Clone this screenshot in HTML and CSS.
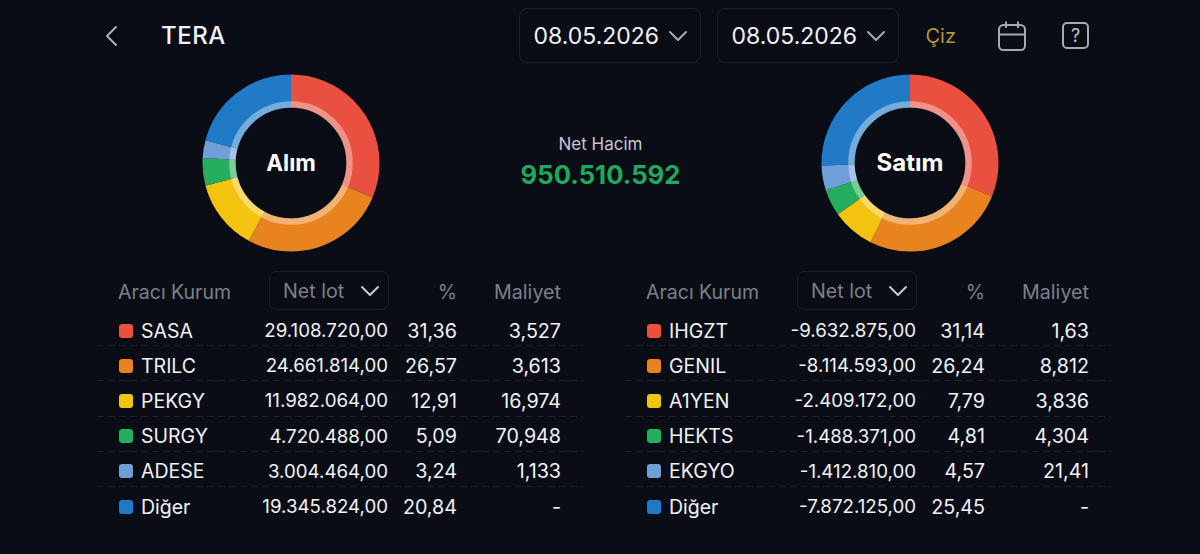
FILE: index.html
```html
<!DOCTYPE html>
<html lang="tr">
<head>
    <meta charset="UTF-8">
    <title>TERA</title>
    <link rel="stylesheet" href="styles.css">
</head>
<body>
    <!-- ust bar -->
    <header class="topbar">
        <svg class="back-icon" width="14" height="22" viewBox="0 0 14 22"><path d="M12 2 L3 11 L12 20"/></svg>
        <h1 class="title">TERA</h1>
        <div class="date-group">
            <div class="date-box">
                <span>08.05.2026</span>
                <svg class="chev" width="20" height="12" viewBox="0 0 20 12"><path d="M2 2 L10 10 L18 2"/></svg>
            </div>
            <div class="date-box">
                <span>08.05.2026</span>
                <svg class="chev" width="20" height="12" viewBox="0 0 20 12"><path d="M2 2 L10 10 L18 2"/></svg>
            </div>
        </div>
        <span class="draw-link">Çiz</span>
        <svg class="tool-icon cal-icon" width="30" height="32" viewBox="0 0 30 32">
            <rect x="2" y="5" width="26" height="25" rx="4.500"/>
            <path d="M2 14.500 H28 M9 1.500 V8 M21 1.500 V8"/>
        </svg>
        <div class="help-icon">?</div>
    </header>

    <!-- halkalar -->
    <section class="charts">
        <svg class="donut" width="178" height="178" viewBox="0 0 178 178">
            <g class="slices" transform="rotate(-90 89 89)">
                <circle r="72" cx="89" cy="89" pathLength="100" stroke="#e9503f" stroke-dasharray="31.36 100"/>
                <circle r="72" cx="89" cy="89" pathLength="100" stroke="#e98320" stroke-dasharray="26.57 100" stroke-dashoffset="-31.36"/>
                <circle r="72" cx="89" cy="89" pathLength="100" stroke="#f3c30f" stroke-dasharray="12.91 100" stroke-dashoffset="-57.93"/>
                <circle r="72" cx="89" cy="89" pathLength="100" stroke="#25ae5e" stroke-dasharray="5.09 100" stroke-dashoffset="-70.84"/>
                <circle r="72" cx="89" cy="89" pathLength="100" stroke="#6f9fd6" stroke-dasharray="3.24 100" stroke-dashoffset="-75.93"/>
                <circle r="72" cx="89" cy="89" pathLength="100" stroke="#207ac6" stroke-dasharray="20.84 100" stroke-dashoffset="-79.16"/>
            </g>
            <circle class="inner-ring" r="58.500" cx="89" cy="89"/>
            <text class="donut-label" x="89" y="97" text-anchor="middle">Alım</text>
        </svg>

        <div class="net-volume">
            <div class="net-label">Net Hacim</div>
            <div class="net-value">950.510.592</div>
        </div>

        <svg class="donut" width="178" height="178" viewBox="0 0 178 178">
            <g class="slices" transform="rotate(-90 89 89)">
                <circle r="72" cx="89" cy="89" pathLength="100" stroke="#e9503f" stroke-dasharray="31.14 100"/>
                <circle r="72" cx="89" cy="89" pathLength="100" stroke="#e98320" stroke-dasharray="26.24 100" stroke-dashoffset="-31.14"/>
                <circle r="72" cx="89" cy="89" pathLength="100" stroke="#f3c30f" stroke-dasharray="7.79 100" stroke-dashoffset="-57.38"/>
                <circle r="72" cx="89" cy="89" pathLength="100" stroke="#25ae5e" stroke-dasharray="4.81 100" stroke-dashoffset="-65.17"/>
                <circle r="72" cx="89" cy="89" pathLength="100" stroke="#6f9fd6" stroke-dasharray="4.57 100" stroke-dashoffset="-69.98"/>
                <circle r="72" cx="89" cy="89" pathLength="100" stroke="#207ac6" stroke-dasharray="25.45 100" stroke-dashoffset="-74.55"/>
            </g>
            <circle class="inner-ring" r="58.500" cx="89" cy="89"/>
            <text class="donut-label sell-label" x="89" y="97" text-anchor="middle">Satım</text>
        </svg>
    </section>

    <!-- tablolar -->
    <section class="tables">
        <div class="broker-table">
            <div class="row head-row">
                <span class="name-head">Aracı Kurum</span>
                <div class="lot-select">
                    <span>Net lot</span>
                    <svg class="chev" width="20" height="12" viewBox="0 0 20 12"><path d="M2 2 L10 10 L18 2"/></svg>
                </div>
                <span class="num">%</span>
                <span class="num">Maliyet</span>
            </div>
            <div class="row"><span class="name"><i class="dot red"></i>SASA</span><span class="num lot">29.108.720,00</span><span class="num">31,36</span><span class="num">3,527</span></div>
            <div class="row"><span class="name"><i class="dot orange"></i>TRILC</span><span class="num lot">24.661.814,00</span><span class="num">26,57</span><span class="num">3,613</span></div>
            <div class="row"><span class="name"><i class="dot yellow"></i>PEKGY</span><span class="num lot">11.982.064,00</span><span class="num">12,91</span><span class="num">16,974</span></div>
            <div class="row"><span class="name"><i class="dot green"></i>SURGY</span><span class="num lot">4.720.488,00</span><span class="num">5,09</span><span class="num">70,948</span></div>
            <div class="row"><span class="name"><i class="dot light"></i>ADESE</span><span class="num lot">3.004.464,00</span><span class="num">3,24</span><span class="num">1,133</span></div>
            <div class="row"><span class="name"><i class="dot blue"></i>Diğer</span><span class="num lot">19.345.824,00</span><span class="num">20,84</span><span class="num">-</span></div>
        </div>

        <div class="broker-table">
            <div class="row head-row">
                <span class="name-head">Aracı Kurum</span>
                <div class="lot-select">
                    <span>Net lot</span>
                    <svg class="chev" width="20" height="12" viewBox="0 0 20 12"><path d="M2 2 L10 10 L18 2"/></svg>
                </div>
                <span class="num">%</span>
                <span class="num">Maliyet</span>
            </div>
            <div class="row"><span class="name"><i class="dot red"></i>IHGZT</span><span class="num lot">-9.632.875,00</span><span class="num">31,14</span><span class="num">1,63</span></div>
            <div class="row"><span class="name"><i class="dot orange"></i>GENIL</span><span class="num lot">-8.114.593,00</span><span class="num">26,24</span><span class="num">8,812</span></div>
            <div class="row"><span class="name"><i class="dot yellow"></i>A1YEN</span><span class="num lot">-2.409.172,00</span><span class="num">7,79</span><span class="num">3,836</span></div>
            <div class="row"><span class="name"><i class="dot green"></i>HEKTS</span><span class="num lot">-1.488.371,00</span><span class="num">4,81</span><span class="num">4,304</span></div>
            <div class="row"><span class="name"><i class="dot light"></i>EKGYO</span><span class="num lot">-1.412.810,00</span><span class="num">4,57</span><span class="num">21,41</span></div>
            <div class="row"><span class="name"><i class="dot blue"></i>Diğer</span><span class="num lot">-7.872.125,00</span><span class="num">25,45</span><span class="num">-</span></div>
        </div>
    </section>
</body>
</html>
```

FILE: styles.css
```css
:root {
    --bg-color: #0a0d16;
    --border-color: #1b2133;
    --text-color: #f2f3f5;
    --muted-color: #7d8087;
}

* {
    box-sizing: border-box;
}

html, body {
    height: 100%;
}

body {
    margin: 0;
    overflow: hidden;
    background-color: var(--bg-color);
    color: var(--text-color);
    font-family: Inter, "Liberation Sans", sans-serif;
}

.topbar {
    display: flex;
    align-items: center;
    height: 71px;
    padding: 0 111px 0 104px;
}

.back-icon path, .chev path {
    fill: none;
    stroke-linecap: round;
    stroke-linejoin: round;
}

.back-icon path {
    stroke: #aeb0b5;
    stroke-width: 2;
}

.chev path {
    stroke: #a9abb0;
    stroke-width: 2;
}

.title {
    margin: 0 0 0 43px;
    font-size: 24px;
    font-weight: 500;
    letter-spacing: 0.5px;
}

.date-group {
    display: flex;
    gap: 16px;
    margin-left: auto;
}

.date-box {
    display: flex;
    align-items: center;
    justify-content: space-between;
    width: 182px;
    height: 55px;
    padding: 0 12px 0 14px;
    border: 1px solid var(--border-color);
    border-radius: 8px;
    font-size: 23px;
}

.draw-link {
    margin-left: 27px;
    font-size: 20px;
    color: #b1963a;
}

.tool-icon {
    fill: none;
    stroke: #a6a9b1;
    stroke-width: 2;
}

.cal-icon {
    margin-left: 41px;
}

.help-icon {
    display: flex;
    align-items: center;
    justify-content: center;
    width: 27px;
    height: 27px;
    margin-left: 35px;
    border: 2px solid #a6a9b1;
    border-radius: 5px;
    font-size: 18px;
    color: #c3c5ca;
}

.charts {
    display: flex;
    align-items: center;
    justify-content: space-between;
    height: 184px;
    padding: 0 201px 0 202px;
}

.slices circle {
    fill: none;
    stroke-width: 33;
}

.inner-ring {
    fill: none;
    stroke: rgba(255, 255, 255, 0.38);
    stroke-width: 6.500;
}

.donut-label {
    fill: #ffffff;
    font-size: 22.500px;
    font-weight: 700;
}

.sell-label {
    font-size: 24px;
}

.net-volume {
    padding-bottom: 3px;
    text-align: center;
}

.net-label {
    font-size: 17px;
    color: #c6c8cd;
}

.net-value {
    margin-top: 5px;
    font-size: 25.700px;
    font-weight: 700;
    color: #1fa95d;
}

.tables {
    display: flex;
    justify-content: space-between;
    padding: 15px 89px 0 97px;
}

.broker-table {
    width: 486px;
}

.row {
    display: grid;
    grid-template-columns: 122px 148px 68px 104px;
    align-items: center;
    height: 35.200px;
    padding: 4px 22px 0;
    background-image: repeating-linear-gradient(90deg, var(--border-color) 0 7px, transparent 7px 11px);
    background-position: left bottom;
    background-repeat: no-repeat;
    background-size: 100% 1px;
    font-size: 19.700px;
}

.row:last-child, .head-row {
    background-image: none;
}

.head-row {
    height: 41px;
    padding-top: 0;
    color: var(--muted-color);
}

.head-row > span {
    padding-top: 3px;
}

.name-head {
    margin-left: -1px;
    white-space: nowrap;
    font-size: 19.500px;
}

.num {
    text-align: right;
    white-space: nowrap;
}

.lot {
    margin-right: 1px;
    font-size: 18.700px;
}

.name {
    display: flex;
    align-items: center;
    gap: 8px;
    font-size: 19.500px;
}

.dot {
    width: 14px;
    height: 14px;
    border-radius: 3px;
}

.dot.red { background-color: #e9503f; }
.dot.orange { background-color: #e98320; }
.dot.yellow { background-color: #f3c30f; }
.dot.green { background-color: #25ae5e; }
.dot.light { background-color: #6f9fd6; }
.dot.blue { background-color: #207ac6; }

.lot-select {
    display: flex;
    align-items: center;
    justify-content: space-between;
    justify-self: end;
    width: 120px;
    height: 39px;
    padding: 0 8px 0 13px;
    border: 1px solid var(--border-color);
    border-radius: 7px;
}

.lot-select .chev path {
    stroke: #c8cad0;
}
```
